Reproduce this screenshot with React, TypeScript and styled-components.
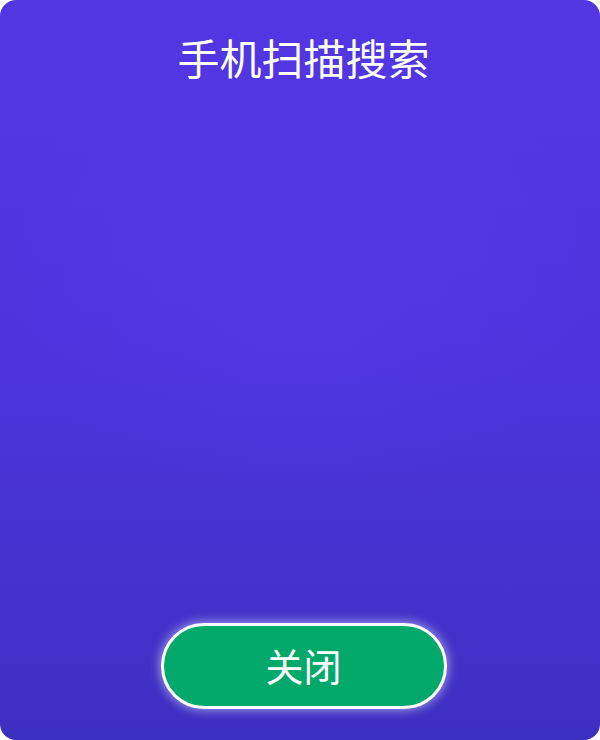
import React from "react";
import styled, { createGlobalStyle } from "styled-components";

const Global = createGlobalStyle`
  html, body { margin: 0; padding: 0; background: #ffffff; }
  body { font-family: "Noto Sans CJK SC", "Noto Sans", sans-serif; }
`;

const Card = styled.div`
  box-sizing: border-box;
  width: 600px;
  height: 740px;
  border-radius: 16px;
  overflow: hidden;
  display: flex;
  flex-direction: column;
  align-items: center;
  background:
    radial-gradient(ellipse 70% 50% at 50% 35%, rgba(90, 60, 240, 0.25), rgba(90, 60, 240, 0) 70%),
    linear-gradient(180deg, #5236e2 0%, #4f34dd 50%, #4232ca 85%, #3b2fc0 100%);
  padding: 30px 0 31px 7px;
`;

const Title = styled.h1`
  margin: 0;
  font-weight: 400;
  font-size: 42px;
  line-height: 54px;
  color: #ffffff;
  letter-spacing: 0;
`;

const Spacer = styled.div`
  flex: 1;
`;

const CloseButton = styled.button`
  box-sizing: border-box;
  width: 286px;
  height: 86px;
  border-radius: 43px;
  border: 3px solid #ffffff;
  background: #03a96b;
  color: #ffffff;
  font-family: "Noto Sans CJK SC", "Noto Sans", sans-serif;
  font-size: 38px;
  line-height: 1;
  cursor: pointer;
  box-shadow: 0 0 10px 2px rgba(255, 255, 255, 0.45);
  display: flex;
  align-items: center;
  justify-content: center;
  padding: 0 0 2px;
`;

export default function App() {
  return (
    <>
      <Global />
      <Card>
        <Title>手机扫描搜索</Title>
        <Spacer />
        <CloseButton>关闭</CloseButton>
      </Card>
    </>
  );
}
